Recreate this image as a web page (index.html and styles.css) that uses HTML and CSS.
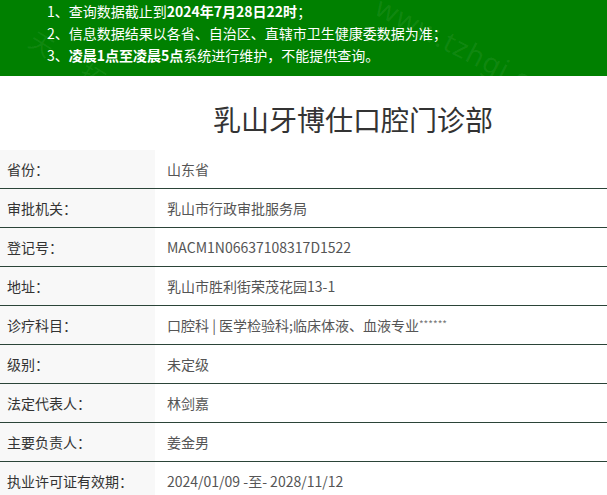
FILE: index.html
```html
<!DOCTYPE html>
<html lang="zh-CN">
<head>
<meta charset="utf-8">
<title>乳山牙博仕口腔门诊部</title>
<link rel="stylesheet" href="styles.css">
</head>
<body>
<div class="notice">
  <p class="line">1、查询数据截止到<b>2024年7月28日22时</b>；</p>
  <p class="line">2、信息数据结果以各省、自治区、直辖市卫生健康委数据为准；</p>
  <p class="line">3、<b>凌晨1点至凌晨5点</b>系统进行维护，不能提供查询。</p>
  <span class="wm wm-left">天拓健</span>
  <span class="wm wm-right">www.tzhgj.com</span>
</div>
<h1 class="title">乳山牙博仕口腔门诊部</h1>
<div class="table">
  <div class="row"><div class="label">省份：</div><div class="value">山东省</div></div>
  <div class="row"><div class="label">审批机关：</div><div class="value">乳山市行政审批服务局</div></div>
  <div class="row"><div class="label">登记号：</div><div class="value">MACM1N06637108317D1522</div></div>
  <div class="row"><div class="label">地址：</div><div class="value">乳山市胜利街荣茂花园13-1</div></div>
  <div class="row"><div class="label">诊疗科目：</div><div class="value">口腔科 | 医学检验科;临床体液、血液专业<span class="stars">******</span></div></div>
  <div class="row"><div class="label">级别：</div><div class="value">未定级</div></div>
  <div class="row"><div class="label">法定代表人：</div><div class="value">林剑嘉</div></div>
  <div class="row"><div class="label">主要负责人：</div><div class="value">姜金男</div></div>
  <div class="row"><div class="label">执业许可证有效期：</div><div class="value">2024/01/09 -至- 2028/11/12</div></div>
</div>
</body>
</html>
```
FILE: styles.css
```css
html, body {
  margin: 0;
  padding: 0;
  background: #fff;
  font-family: "Noto Sans CJK SC", "Noto Sans", sans-serif;
}
.notice {
  position: relative;
  overflow: hidden;
  background: #008000;
  color: #fff;
  padding: 0 0 10px 47px;
  height: 66px;
}
.line {
  margin: 0;
  font-size: 14px;
  line-height: 22px;
  white-space: nowrap;
}
.line b { font-weight: 700; }
.wm {
  position: absolute;
  color: rgba(255, 255, 255, 0.07);
  white-space: nowrap;
  pointer-events: none;
}
.wm-right {
  left: 378px;
  top: -14px;
  font-family: "Noto Sans", sans-serif;
  font-size: 28px;
  line-height: 36px;
  transform: rotate(27deg);
  transform-origin: 0 50%;
  letter-spacing: 1px;
}
.wm-left {
  left: 32px;
  top: 20px;
  font-size: 24px;
  line-height: 34px;
  letter-spacing: 36px;
  transform: rotate(32deg);
  transform-origin: 0 50%;
}
.title {
  margin: 0;
  padding: 23px 0 11px 213px;
  font-size: 28px;
  line-height: 40px;
  font-weight: 400;
  color: #333;
  white-space: nowrap;
}
.table {
  display: flex;
  flex-direction: column;
}
.row {
  display: flex;
  height: 38px;
  border-bottom: 1px solid #2b4438;
  font-size: 14px;
}
.label {
  width: 148px;
  padding-left: 7px;
  background: #f8f8f8;
  color: #333;
  display: flex;
  align-items: center;
  white-space: nowrap;
}
.value {
  flex: 1;
  padding-left: 12px;
  color: #555;
  display: flex;
  align-items: center;
  white-space: nowrap;
}
.stars {
  font-size: 10px;
  color: #777;
  align-self: center;
  margin-top: -4px;
}
```
